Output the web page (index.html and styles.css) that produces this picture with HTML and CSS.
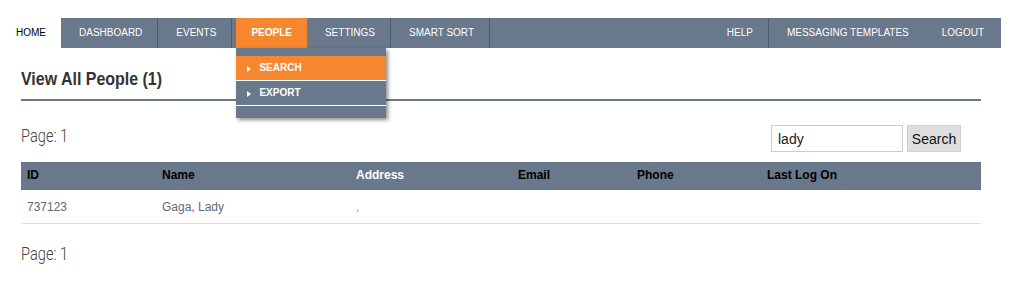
FILE: index.html
```html
<!DOCTYPE html>
<html lang="en">
<head>
<meta charset="utf-8">
<title>View All People</title>
<link rel="stylesheet" href="styles.css">
</head>
<body>
<nav class="topnav">
  <a class="nav-home" href="#">HOME</a>
  <div class="nav-bar">
    <ul class="nav-list">
      <li class="sep"><a href="#">DASHBOARD</a></li>
      <li class="sep"><a href="#">EVENTS</a></li>
      <li class="active"><a href="#">PEOPLE</a>
        <ul class="dropdown">
          <li class="current"><a href="#"><span class="arrow"></span>SEARCH</a></li>
          <li><a href="#"><span class="arrow"></span>EXPORT</a></li>
        </ul>
      </li>
      <li class="sep"><a href="#">SETTINGS</a></li>
      <li class="sep"><a href="#">SMART SORT</a></li>
    </ul>
    <ul class="nav-list nav-right">
      <li class="sep"><a href="#">HELP</a></li>
      <li><a href="#">MESSAGING TEMPLATES</a></li>
      <li class="last"><a href="#">LOGOUT</a></li>
    </ul>
  </div>
</nav>

<main class="content">
  <h1 class="page-title"><span class="cond-bold">View All People (1)</span></h1>

  <div class="toolbar">
    <div class="pager"><span class="cond-light">Page: 1</span></div>
    <form class="search-form">
      <input class="search-input" type="text" value="lady">
      <button class="search-btn" type="button">Search</button>
    </form>
  </div>

  <table class="people-table">
    <thead>
      <tr>
        <th class="c-id">ID</th>
        <th class="c-name">Name</th>
        <th class="c-addr th-light">Address</th>
        <th class="c-email">Email</th>
        <th class="c-phone">Phone</th>
        <th class="c-last">Last Log On</th>
      </tr>
    </thead>
    <tbody>
      <tr>
        <td>737123</td>
        <td><a class="name-link" href="#">Gaga, Lady</a></td>
        <td class="addr">,</td>
        <td></td>
        <td></td>
        <td></td>
      </tr>
    </tbody>
  </table>

  <div class="pager pager-bottom"><span class="cond-light">Page: 1</span></div>
</main>
</body>
</html>
```

FILE: styles.css
```css
html, body {
  margin: 0;
  padding: 0;
  background: #fff;
}

body {
  font-family: "Liberation Sans", Arial, sans-serif;
  color: #333;
  width: 1010px;
}

a {
  text-decoration: none;
}

/* ---------- top navigation ---------- */
.topnav {
  display: flex;
  width: 1001px;
  height: 30px;
  margin-top: 18px;
  font-size: 10px;
  line-height: 30px;
}

.nav-home {
  display: block;
  padding: 0 15px 0 16px;
  color: #000;
  background: #fff;
}

.nav-bar {
  flex: 1;
  display: flex;
  justify-content: space-between;
  background: #6a788c;
}

.nav-list {
  display: flex;
  list-style: none;
  margin: 0;
  padding: 0;
}

.nav-list > li {
  position: relative;
}

.nav-list > li > a {
  display: block;
  padding: 0 15px 0 18px;
  color: #fff;
}

.nav-list > li.sep {
  border-right: 1px solid #4f5a69;
}

.nav-list > li.last > a {
  padding-right: 17px;
}

.nav-list > li.active {
  margin-left: 4px;
}

.nav-list > li.active > a {
  padding: 0 15px;
  background: #f5882f;
  font-weight: bold;
}

/* ---------- dropdown ---------- */
.dropdown {
  position: absolute;
  top: 30px;
  left: 0;
  width: 150px;
  margin: 0;
  padding: 8px 0 12px;
  list-style: none;
  background: #6a788c;
  box-shadow: 2px 2px 4px rgba(0, 0, 0, 0.45);
  z-index: 10;
}

.dropdown li {
  border-bottom: 1px solid #fff;
}

.dropdown li a {
  display: flex;
  align-items: center;
  height: 24px;
  padding-left: 11px;
  color: #fff;
  font-weight: bold;
  font-size: 10px;
  line-height: 24px;
}

.dropdown li.current a {
  background: #f5882f;
}

.arrow {
  width: 0;
  height: 0;
  margin: 2px 8px 0 0;
  border-left: 4px solid #fff;
  border-top: 3px solid transparent;
  border-bottom: 3px solid transparent;
}

/* ---------- content ---------- */
.content {
  padding: 0 29px 0 21px;
}

.page-title {
  margin: 20px 0 0;
  padding-bottom: 9px;
  border-bottom: 2px solid #6a788c;
  font-size: 19px;
  line-height: 22px;
  font-weight: bold;
  color: #333;
}

.cond-bold {
  display: inline-block;
  font-family: "Liberation Sans", Arial, sans-serif;
  font-weight: bold;
  transform: scaleX(0.84);
  transform-origin: left center;
  white-space: nowrap;
}

.toolbar {
  display: flex;
  justify-content: space-between;
  align-items: flex-start;
  margin-top: 24px;
}

.pager {
  margin-top: 1px;
  font-size: 19px;
  line-height: 20px;
  color: #444;
}

.cond-light {
  display: inline-block;
  font-family: Roboto, "Liberation Sans", sans-serif;
  font-weight: 300;
  transform: scaleX(0.77);
  transform-origin: left center;
  white-space: nowrap;
}

.search-form {
  display: flex;
  gap: 4px;
  margin: 0 20px 0 0;
}

.search-input {
  box-sizing: border-box;
  width: 132px;
  height: 27px;
  margin: 0;
  padding: 0 6px;
  border: 1px solid #ccc;
  font-family: "Liberation Sans", Arial, sans-serif;
  font-size: 14px;
  color: #222;
  outline: none;
}

.search-btn {
  box-sizing: border-box;
  width: 54px;
  height: 27px;
  margin: 0;
  padding: 0;
  border: 1px solid #d2d2d2;
  background: #dedede;
  font-family: "Liberation Sans", Arial, sans-serif;
  font-size: 14px;
  color: #111;
}

/* ---------- table ---------- */
.people-table {
  width: 960px;
  margin-top: 10px;
  border-collapse: collapse;
  table-layout: fixed;
  font-size: 12px;
}

.people-table th {
  padding: 6px 6px 8px;
  height: 14px;
  line-height: 14px;
  text-align: left;
  font-weight: bold;
  color: #000;
  background: #6a788c;
}

.people-table th.th-light {
  color: #fff;
}

.c-id { width: 123px; }
.c-name { width: 182px; }
.c-addr { width: 150px; }
.c-email { width: 107px; }
.c-phone { width: 118px; }
.c-last { width: auto; }

.people-table td {
  padding: 10px 6px 9px;
  height: 14px;
  line-height: 14px;
  color: #666;
  border-bottom: 1px solid #ddd;
}

.people-table td.addr {
  color: #999;
}

.name-link {
  color: #5d6d82;
}

.pager-bottom {
  margin-top: 20px;
}
```
